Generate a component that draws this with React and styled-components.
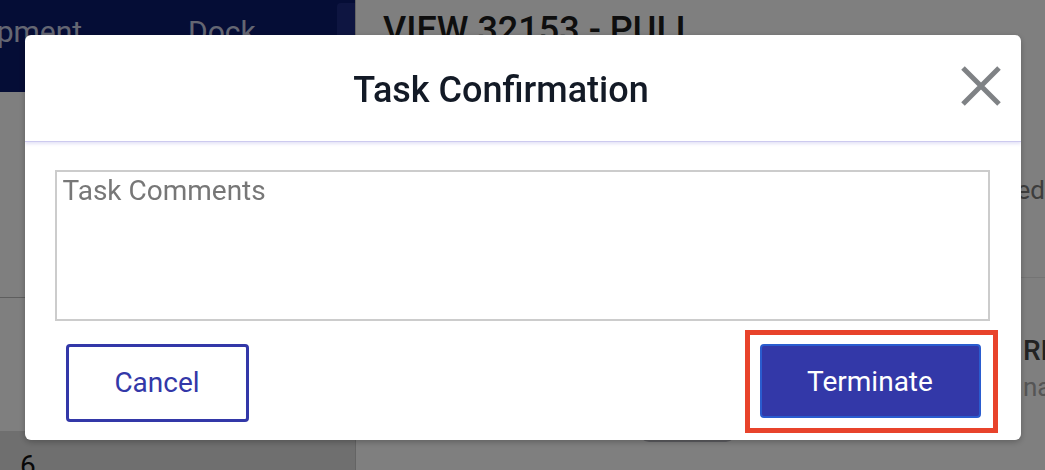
import React from "react";
import styled, { createGlobalStyle } from "styled-components";

const Global = createGlobalStyle`
  html, body { margin: 0; padding: 0; height: 100%; overflow: hidden; }
  body { font-family: Roboto, "Liberation Sans", Arial, sans-serif; background: #fff; }
  #root { height: 100%; }
  * { box-sizing: border-box; }
`;

const Page = styled.div`
  display: flex;
  height: 470px;
  width: 1045px;
  overflow: hidden;
  position: relative;
`;

const Sidebar = styled.aside`
  width: 356px;
  flex: none;
  display: flex;
  flex-direction: column;
  border-right: 1px solid #c8c8c8;
  background: #fefefe;
`;

const SideHeader = styled.div`
  flex: none;
  height: 92px;
  background: #0b1a6c;
  display: flex;
  align-items: flex-start;
  padding-top: 14px;
  position: relative;
  color: #c9cde4;
  font-size: 30px;
  overflow: hidden;
`;

const Tab = styled.div`
  flex: none;
  width: ${p => p.$w}px;
  margin-left: ${p => p.$ml || 0}px;
  white-space: nowrap;
  ${p => p.$active && `
    background: #1d2b82;
    height: 40px;
    margin-top: -11px;
    border-radius: 4px 0 0 0;
  `}
`;

const SideSection = styled.div`
  flex: none;
  height: ${p => p.$h}px;
  border-bottom: 1px solid ${p => p.$line || "transparent"};
`;

const SideFooter = styled.div`
  flex: 1;
  min-height: 0;
  overflow: hidden;
  background: #dedede;
  padding: 18px 0 0 20px;
  font-size: 28px;
  line-height: 33px;
  color: #111;
`;

const Main = styled.main`
  flex: 1;
  display: flex;
  flex-direction: column;
  padding-left: 27px;
  min-width: 0;
`;

const MainTitle = styled.h1`
  flex: none;
  margin: 0;
  padding-top: 9px;
  font-size: 36px;
  font-weight: 500;
  color: #1c1c1c;
  height: 150px;
  white-space: nowrap;
`;

const InfoRow = styled.div`
  flex: none;
  height: ${p => p.$h}px;
  border-bottom: 1px solid ${p => p.$line || "transparent"};
  display: flex;
  flex-direction: column;
  align-items: ${p => (p.$right ? "flex-end" : "flex-start")};
  padding-left: ${p => (p.$right ? 0 : 640)}px;
  padding-top: ${p => p.$pt || 0}px;
  white-space: nowrap;
`;

const InfoText = styled.span`
  font-size: ${p => p.$size || 26}px;
  font-weight: ${p => p.$weight || 400};
  color: ${p => p.$color || "#777"};
  line-height: ${p => p.$lh || 36}px;
`;

const PillRow = styled.div`
  display: flex;
  padding-left: 256px;
  padding-top: 6px;
`;

const Pill = styled.div`
  width: 97px;
  height: 16px;
  border-radius: 0 0 10px 10px;
  background: #bcbcc4;
`;

const Overlay = styled.div`
  position: fixed;
  inset: 0;
  background: rgba(0, 0, 0, 0.5);
  display: flex;
  justify-content: center;
  align-items: flex-start;
  padding-top: 35px;
`;

const Modal = styled.div`
  width: 996px;
  height: 405px;
  background: #fff;
  border-radius: 6px;
  box-shadow: 0 2px 6px rgba(0, 0, 0, 0.25);
  display: flex;
  flex-direction: column;
  overflow: hidden;
`;

const Header = styled.div`
  flex: none;
  height: 107px;
  display: flex;
  align-items: center;
  padding: 0 20px;
  border-bottom: 1px solid #cdcaef;
  box-shadow: 0 2px 3px rgba(110, 100, 210, 0.18);
`;

const Title = styled.h2`
  flex: 1;
  margin: 0;
  text-align: center;
  font-size: 36px;
  font-weight: 500;
  color: #131a26;
  padding-top: 4px;
`;

const CloseButton = styled.button`
  width: 43px;
  height: 43px;
  border: 0;
  background: transparent;
  padding: 0;
  display: flex;
  align-items: center;
  justify-content: flex-end;
  cursor: pointer;
  margin-top: -4px;
`;

const Body = styled.div`
  padding: 28px 31px 0 30px;
`;

const Comments = styled.textarea`
  display: block;
  width: 100%;
  height: 151px;
  border: 2px solid #cccccc;
  border-radius: 0;
  resize: none;
  padding: 2px 6px 0;
  font-family: Roboto, "Liberation Sans", Arial, sans-serif;
  font-size: 28px;
  color: #333;
  outline: none;
  &::placeholder { color: #777777; }
`;

const Footer = styled.div`
  display: flex;
  justify-content: space-between;
  align-items: center;
  padding: 9px 23px 0 41px;
`;

const Button = styled.button`
  font-family: Roboto, "Liberation Sans", Arial, sans-serif;
  font-size: 28px;
  font-weight: 400;
  border-radius: 4px;
  cursor: pointer;
  ${p => p.$primary ? `
    width: 221px;
    height: 74px;
    background: #3338a8;
    color: #ffffff;
    border: 2px solid #2a5ccf;
  ` : `
    width: 183px;
    height: 78px;
    background: #ffffff;
    color: #3338a8;
    border: 3px solid #3338a8;
    margin-top: 2px;
  `}
`;

const Highlight = styled.div`
  border: 5px solid #e8432b;
  padding: 9px 12px 10px 10px;
  display: flex;
`;

export default function App() {
  return (
    <>
      <Global />
      <Page>
        <Sidebar>
          <SideHeader>
            <Tab $w={190} $ml={-45}>Shipment</Tab>
            <Tab $w={80} $ml={43}>Dock</Tab>
            <Tab $w={18} $ml={69} $active />
          </SideHeader>
          <SideSection $h={206} $line="#bdbdbd" />
          <SideSection $h={133} />
          <SideFooter>6</SideFooter>
        </Sidebar>
        <Main>
          <MainTitle>VIEW 32153 - PULL</MainTitle>
          <InfoRow $h={128} $pt={22} $line="#e8e8e8" $right>
            <InfoText $color="#7a7a7a">Completed</InfoText>
          </InfoRow>
          <InfoRow $h={142} $pt={55}>
            <InfoText $size={28} $weight={500} $color="#444">RIVERSIDE</InfoText>
            <InfoText $size={26} $color="#aaa" $lh={36}>name</InfoText>
          </InfoRow>
          <PillRow>
            <Pill />
          </PillRow>
        </Main>
        <Overlay>
          <Modal role="dialog">
            <Header>
              <Title>Task Confirmation</Title>
              <CloseButton aria-label="Close">
                <svg width="40" height="40" viewBox="0 0 40 40">
                  <path d="M2 2 L38 38 M38 2 L2 38" stroke="#7f8285" strokeWidth="5" fill="none" />
                </svg>
              </CloseButton>
            </Header>
            <Body>
              <Comments placeholder="Task Comments" />
            </Body>
            <Footer>
              <Button>Cancel</Button>
              <Highlight>
                <Button $primary>Terminate</Button>
              </Highlight>
            </Footer>
          </Modal>
        </Overlay>
      </Page>
    </>
  );
}
